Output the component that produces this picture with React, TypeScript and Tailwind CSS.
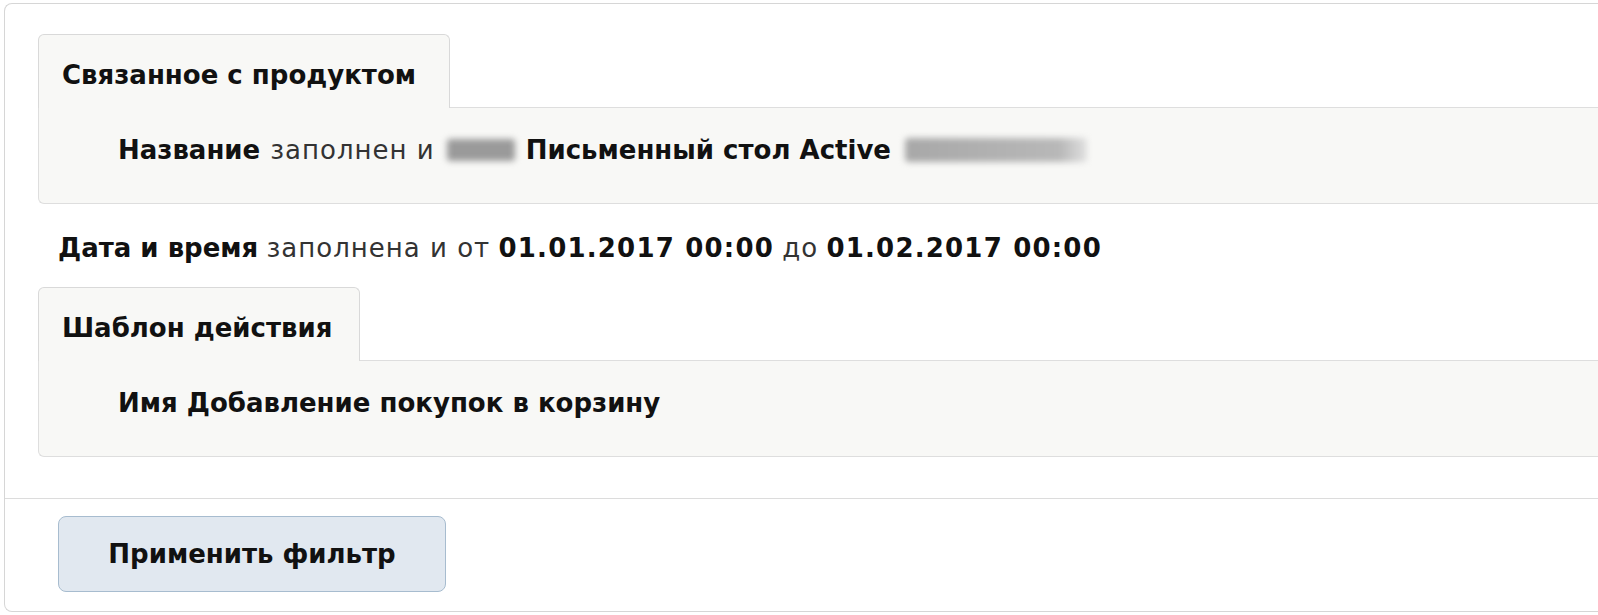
const FONT = "font-['DejaVu_Sans','Verdana',sans-serif]";

function Group({ title, tabWidth, children }: { title: string; tabWidth: string; children: React.ReactNode }) {
  return (
    <div className="flex flex-col">
      {/* Tab */}
      <div
        className={`relative z-10 -mb-px flex h-[74px] items-center rounded-t-[6px] border border-b-0 border-[#d9d9d9] bg-[#f8f8f6] pl-[23px] pt-[7px] ${tabWidth}`}
      >
        <span className="font-bold text-[#111]">{title}</span>
      </div>
      {/* Panel */}
      <div className="flex h-[97px] items-start rounded-bl-[6px] border border-r-0 border-[#dedede] bg-[#f8f8f6] pl-[79px] pt-[25px]">
        {children}
      </div>
    </div>
  );
}

export default function App() {
  return (
    <div className={`h-[615px] w-full overflow-hidden bg-white pl-[4px] pt-[3px] text-[26px] leading-[34px] text-[#333] ${FONT}`}>
      <div className="flex h-[609px] flex-col rounded-l-[8px] border border-r-0 border-[#d6d6d6]">
        <div className="flex flex-col pl-[33px] pt-[30px]">
          <Group title="Связанное с продуктом" tabWidth="w-[412px]">
            <p className="flex items-center">
              <b className="text-[#111]">Название</b>
              <span className="ml-[10px] tracking-[1px]">заполнен и</span>
              {/* скрытое значение */}
              <span className="ml-[12px] inline-block h-[22px] w-[68px] rounded-[3px] bg-[#9a9a9a] blur-[3px]" />
              <b className="ml-[11px] text-[#111]">Письменный стол Active</b>
              <span className="ml-[14px] inline-block h-[24px] w-[182px] rounded-[4px] bg-[linear-gradient(90deg,#a8a8a8,#b8b8b8_85%,#e0e0e0)] blur-[3px]" />
            </p>
          </Group>

          <p className="mt-[27px] mb-[22px] pl-[20px]">
            <b className="text-[#111]">Дата и время</b>{" "}
            <span className="tracking-[1px]">заполнена и от</span>{" "}
            <b className="tracking-[1.2px] text-[#111]">01.01.2017 00:00</b>{" "}
            <span className="tracking-[1px]">до</span>{" "}
            <b className="tracking-[1.2px] text-[#111]">01.02.2017 00:00</b>
          </p>

          <Group title="Шаблон действия" tabWidth="w-[322px]">
            <p>
              <b className="text-[#111]">Имя Добавление покупок в корзину</b>
            </p>
          </Group>
        </div>

        {/* Footer */}
        <div className="mt-[41px] flex-1 border-t border-[#dcdcdc] pl-[53px] pt-[17px]">
          <button className="h-[76px] w-[388px] rounded-[8px] border border-[#a7bccf] bg-[#e1e8f0] font-bold text-[#111]">
            Применить фильтр
          </button>
        </div>
      </div>
    </div>
  );
}
